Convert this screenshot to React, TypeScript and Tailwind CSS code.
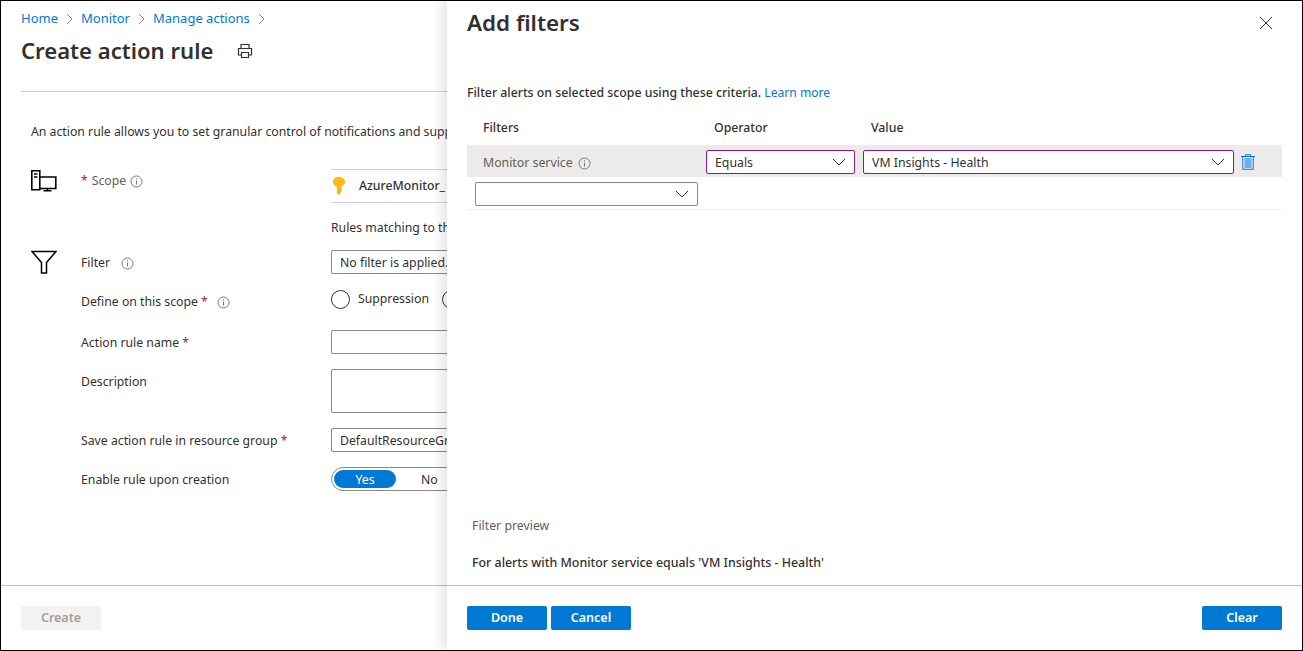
const FONT = "font-['Noto_Sans','Open_Sans',sans-serif]";

function Chevron({ className = "" }: { className?: string }) {
  return (
    <svg width="14" height="8" viewBox="0 0 14 8" fill="none" className={className}>
      <path d="M1 1l6 6 6-6" stroke="#323130" strokeWidth="1" />
    </svg>
  );
}

function Info({ className = "" }: { className?: string }) {
  return (
    <svg width="13" height="13" viewBox="0 0 13 13" fill="none" className={className}>
      <circle cx="6.5" cy="6.5" r="5.5" stroke="#7a7876" />
      <path d="M6.5 5.6v4M6.5 3.3v1.2" stroke="#7a7876" />
    </svg>
  );
}

function Crumb() {
  return (
    <svg width="9" height="12" viewBox="0 0 9 12" fill="none">
      <path d="M2 1l5 5-5 5" stroke="#8a8886" />
    </svg>
  );
}

function Req() {
  return <span className="text-[#a4262c]">*</span>;
}

function Field({ children, className = "" }: { children?: React.ReactNode; className?: string }) {
  return (
    <div className={`flex h-[24px] w-[200px] shrink-0 items-center whitespace-nowrap rounded-[2px] border border-[#8a8886] pl-[8px] pt-[2px] text-[#323130] ${className}`}>
      {children}
    </div>
  );
}

function Select({ children, className = "" }: { children?: React.ReactNode; className?: string }) {
  return (
    <div className={`flex h-[24px] shrink-0 items-center justify-between rounded-[2px] border bg-white pl-[8px] pr-[8px] text-[#323130] ${className}`}>
      <span className="translate-y-px">{children}</span>
      <Chevron />
    </div>
  );
}

function BlueButton({ children }: { children: React.ReactNode }) {
  return (
    <button className="h-[24px] w-[80px] rounded-[2px] bg-[#0078d4] text-[12.5px] font-semibold text-white">
      {children}
    </button>
  );
}

function ActionRuleForm() {
  return (
    <div className="flex flex-1 flex-col overflow-hidden pl-[20px]">
      <div className="mt-[12px] flex h-[11px] items-center gap-[7px] text-[13px] text-[#0078d4]">
        <span>Home</span>
        <Crumb />
        <span>Monitor</span>
        <Crumb />
        <span>Manage actions</span>
        <Crumb />
      </div>
      <div className="mt-[10px] flex h-[34px] items-center">
        <h1 className="text-[22.1px] font-semibold text-[#323130]">Create action rule</h1>
        <svg width="16" height="16" viewBox="0 0 16 16" fill="none" className="ml-[24px]">
          <path d="M4 5V1.5h8V5M4 12H1.5V5.5h13V12H12M4.5 9.5h7v5h-7z" stroke="#323130" strokeWidth="1.2" />
        </svg>
      </div>
      <div className="mt-[23px] h-px bg-[#d2d0ce]" />

      <p className="ml-[10px] mt-[31px] whitespace-nowrap text-[#323130]">
        An action rule allows you to set granular control of notifications and supp
      </p>

      <div className="mt-[28px] flex h-[34px]">
        <svg width="26" height="22" viewBox="0 0 26 22" fill="none" className="ml-[10px] mt-[1px]">
          <path d="M.8.8h8v19h-8zM8.8 7h16v11.5h-16M3 4h3.5M3 7h3.5M16.5 18.5v2.5M12.5 20.8h8" stroke="#000" strokeWidth="1.6" />
        </svg>
        <div className="ml-[24px] flex h-[24px] w-[250px] items-center gap-[4px] text-[#605e5c]">
          <span className="text-[#e00b1c]">*</span>
          <span>Scope</span>
          <Info />
        </div>
        <div className="flex h-[34px] flex-1 items-center whitespace-nowrap border-y border-[#d2d0ce] font-medium text-[#323130]">
          <svg width="12" height="18" viewBox="0 0 12 18" className="ml-[2px] mr-[14px]">
            <path d="M6 0c3.400 0 6 1.800 6 4.800 0 2.200-1.400 3.600-3.500 4.300v5.400L6 18l-2.500-2.500 1-1.200-1-1.300 1-1.200-1-1.300v-1.400C1.400 8.400 0 7 0 4.800 0 1.800 2.600 0 6 0z" fill="#fcb814" />
          </svg>
          AzureMonitor_
        </div>
      </div>
      <p className="ml-[310px] mt-[16px] h-[18px] whitespace-nowrap leading-[18px] text-[#323130]">Rules matching to th</p>

      <FormRows />
    </div>
  );
}

function FormRows() {
  return (
    <div className="text-[#323130]">
      <div className="mt-[13px] flex h-[24px] items-center">
        <svg width="26" height="24" viewBox="0 0 26 24" fill="none" className="ml-[10px] shrink-0">
          <path d="M1 1.500h24l-9.500 11V23h-5V12.500z" stroke="#000" strokeWidth="1.500" />
        </svg>
        <div className="ml-[24px] flex w-[250px] translate-y-px items-center">
          <span>Filter</span>
          <Info className="ml-[11px]" />
        </div>
        <Field>No filter is applied.</Field>
      </div>
      <div className="mt-[16px] flex h-[24px] items-center">
        <div className="ml-[60px] flex w-[250px] items-center">
          <span>Define on this scope <Req /></span>
          <Info className="ml-[9px]" />
        </div>
        <div className="flex -translate-y-[3px] items-center">
          <span className="h-[19px] w-[19px] shrink-0 rounded-full border border-[#323130]" />
          <span className="ml-[8px]">Suppression</span>
          <span className="ml-[13px] h-[19px] w-[19px] shrink-0 rounded-full border border-[#323130]" />
        </div>
      </div>
      <div className="mt-[16px] flex h-[24px] items-center">
        <span className="ml-[60px] w-[250px] translate-y-px">Action rule name <Req /></span>
        <Field />
      </div>
      <div className="mt-[15px] flex h-[44px]">
        <span className="ml-[60px] mt-[4px] w-[250px]">Description</span>
        <Field className="!h-[44px]" />
      </div>
      <div className="mt-[15px] flex h-[24px] items-center">
        <span className="ml-[60px] w-[250px] translate-y-px">Save action rule in resource group <Req /></span>
        <Field>DefaultResourceGroup</Field>
      </div>
      <div className="mt-[15px] flex h-[24px] items-center">
        <span className="ml-[60px] w-[250px] translate-y-px">Enable rule upon creation</span>
        <div className="flex h-[24px] w-[200px] shrink-0 items-center rounded-full border border-[#8a8886] pl-[2px]">
          <span className="flex h-[18px] w-[62px] items-center justify-center rounded-full bg-[#0078d4] pt-[1px] text-white">Yes</span>
          <span className="ml-[25px] translate-y-px">No</span>
        </div>
      </div>
    </div>
  );
}

function FiltersPanel() {
  return (
    <div className="absolute bottom-0 right-0 top-0 left-[446px] flex flex-col bg-white pl-[20px] pr-[20px] text-[12.3px] text-[#323130] shadow-[-6px_0_10px_rgba(0,0,0,0.1)]">
      <div className="flex h-[44px] items-center justify-between">
        <h2 className="text-[22.4px] font-semibold">Add filters</h2>
        <svg width="14" height="14" viewBox="0 0 14 14" fill="none" className="mr-[9px]">
          <path d="M1 1l12 12M13 1L1 13" stroke="#323130" />
        </svg>
      </div>
      <p className="mt-[39px] h-[18px] font-medium leading-[18px]">
        Filter alerts on selected scope using these criteria. <span className="text-[12.1px] font-normal text-[#0078d4]">Learn more</span>
      </p>
      <div className="mt-[17px] flex h-[18px] items-center font-medium leading-[18px]">
        <span className="ml-[16px] w-[231px]">Filters</span>
        <span className="w-[157px]">Operator</span>
        <span>Value</span>
      </div>
      <div className="mt-[8px] flex h-[32px] items-center bg-[#edebe9] pt-[2px]">
        <div className="flex w-[239px] translate-y-px items-center pl-[16px]">
          <span className="text-[#605e5c]">Monitor service</span>
          <Info className="ml-[5px]" />
        </div>
        <Select className="w-[149px] border-[#881798]">Equals</Select>
        <Select className="ml-[8px] w-[371px] border-[#881798]">VM Insights - Health</Select>
        <svg width="14" height="16" viewBox="0 0 14 16" fill="none" className="ml-[7px]">
          <path d="M0 2.500h14M4.500 2.500V.7h5v1.800" stroke="#0078d4" />
          <path d="M1.800 2.500v12.800h10.400V2.500z" stroke="#0078d4" />
          <path d="M3.500 4h7v10h-7z" fill="#71afe5" />
        </svg>
      </div>
      <div className="h-[33px] border-b border-[#edebe9] pl-[8px] pt-[5px]">
        <Select className="w-[223px] border-[#8a8886]" />
      </div>
      <div className="flex-1" />
      <p className="ml-[5px] h-[18px] leading-[18px] text-[#605e5c]">Filter preview</p>
      <p className="ml-[5px] mt-[19px] h-[18px] text-[12.4px] font-medium leading-[18px]">For alerts with Monitor service equals 'VM Insights - Health'</p>
      <div className="mt-[13px] -mx-[20px] h-px bg-[#bdbdbd]" />
      <div className="flex h-[64px] items-start justify-between pt-[20px]">
        <div className="flex gap-[4px]">
          <BlueButton>Done</BlueButton>
          <BlueButton>Cancel</BlueButton>
        </div>
        <BlueButton>Clear</BlueButton>
      </div>
    </div>
  );
}

export default function App() {
  return (
    <div className={`${FONT} relative flex h-[651px] w-[1303px] flex-col overflow-hidden border border-black bg-white text-[12.25px]`}>
      <ActionRuleForm />
      <div className="h-[65px] shrink-0 border-t border-[#bdbdbd] pl-[20px] pt-[20px]">
        <button className="h-[24px] w-[80px] rounded-[2px] bg-[#f3f2f1] text-[12.5px] font-semibold text-[#a19f9d]">Create</button>
      </div>
      <FiltersPanel />
    </div>
  );
}
